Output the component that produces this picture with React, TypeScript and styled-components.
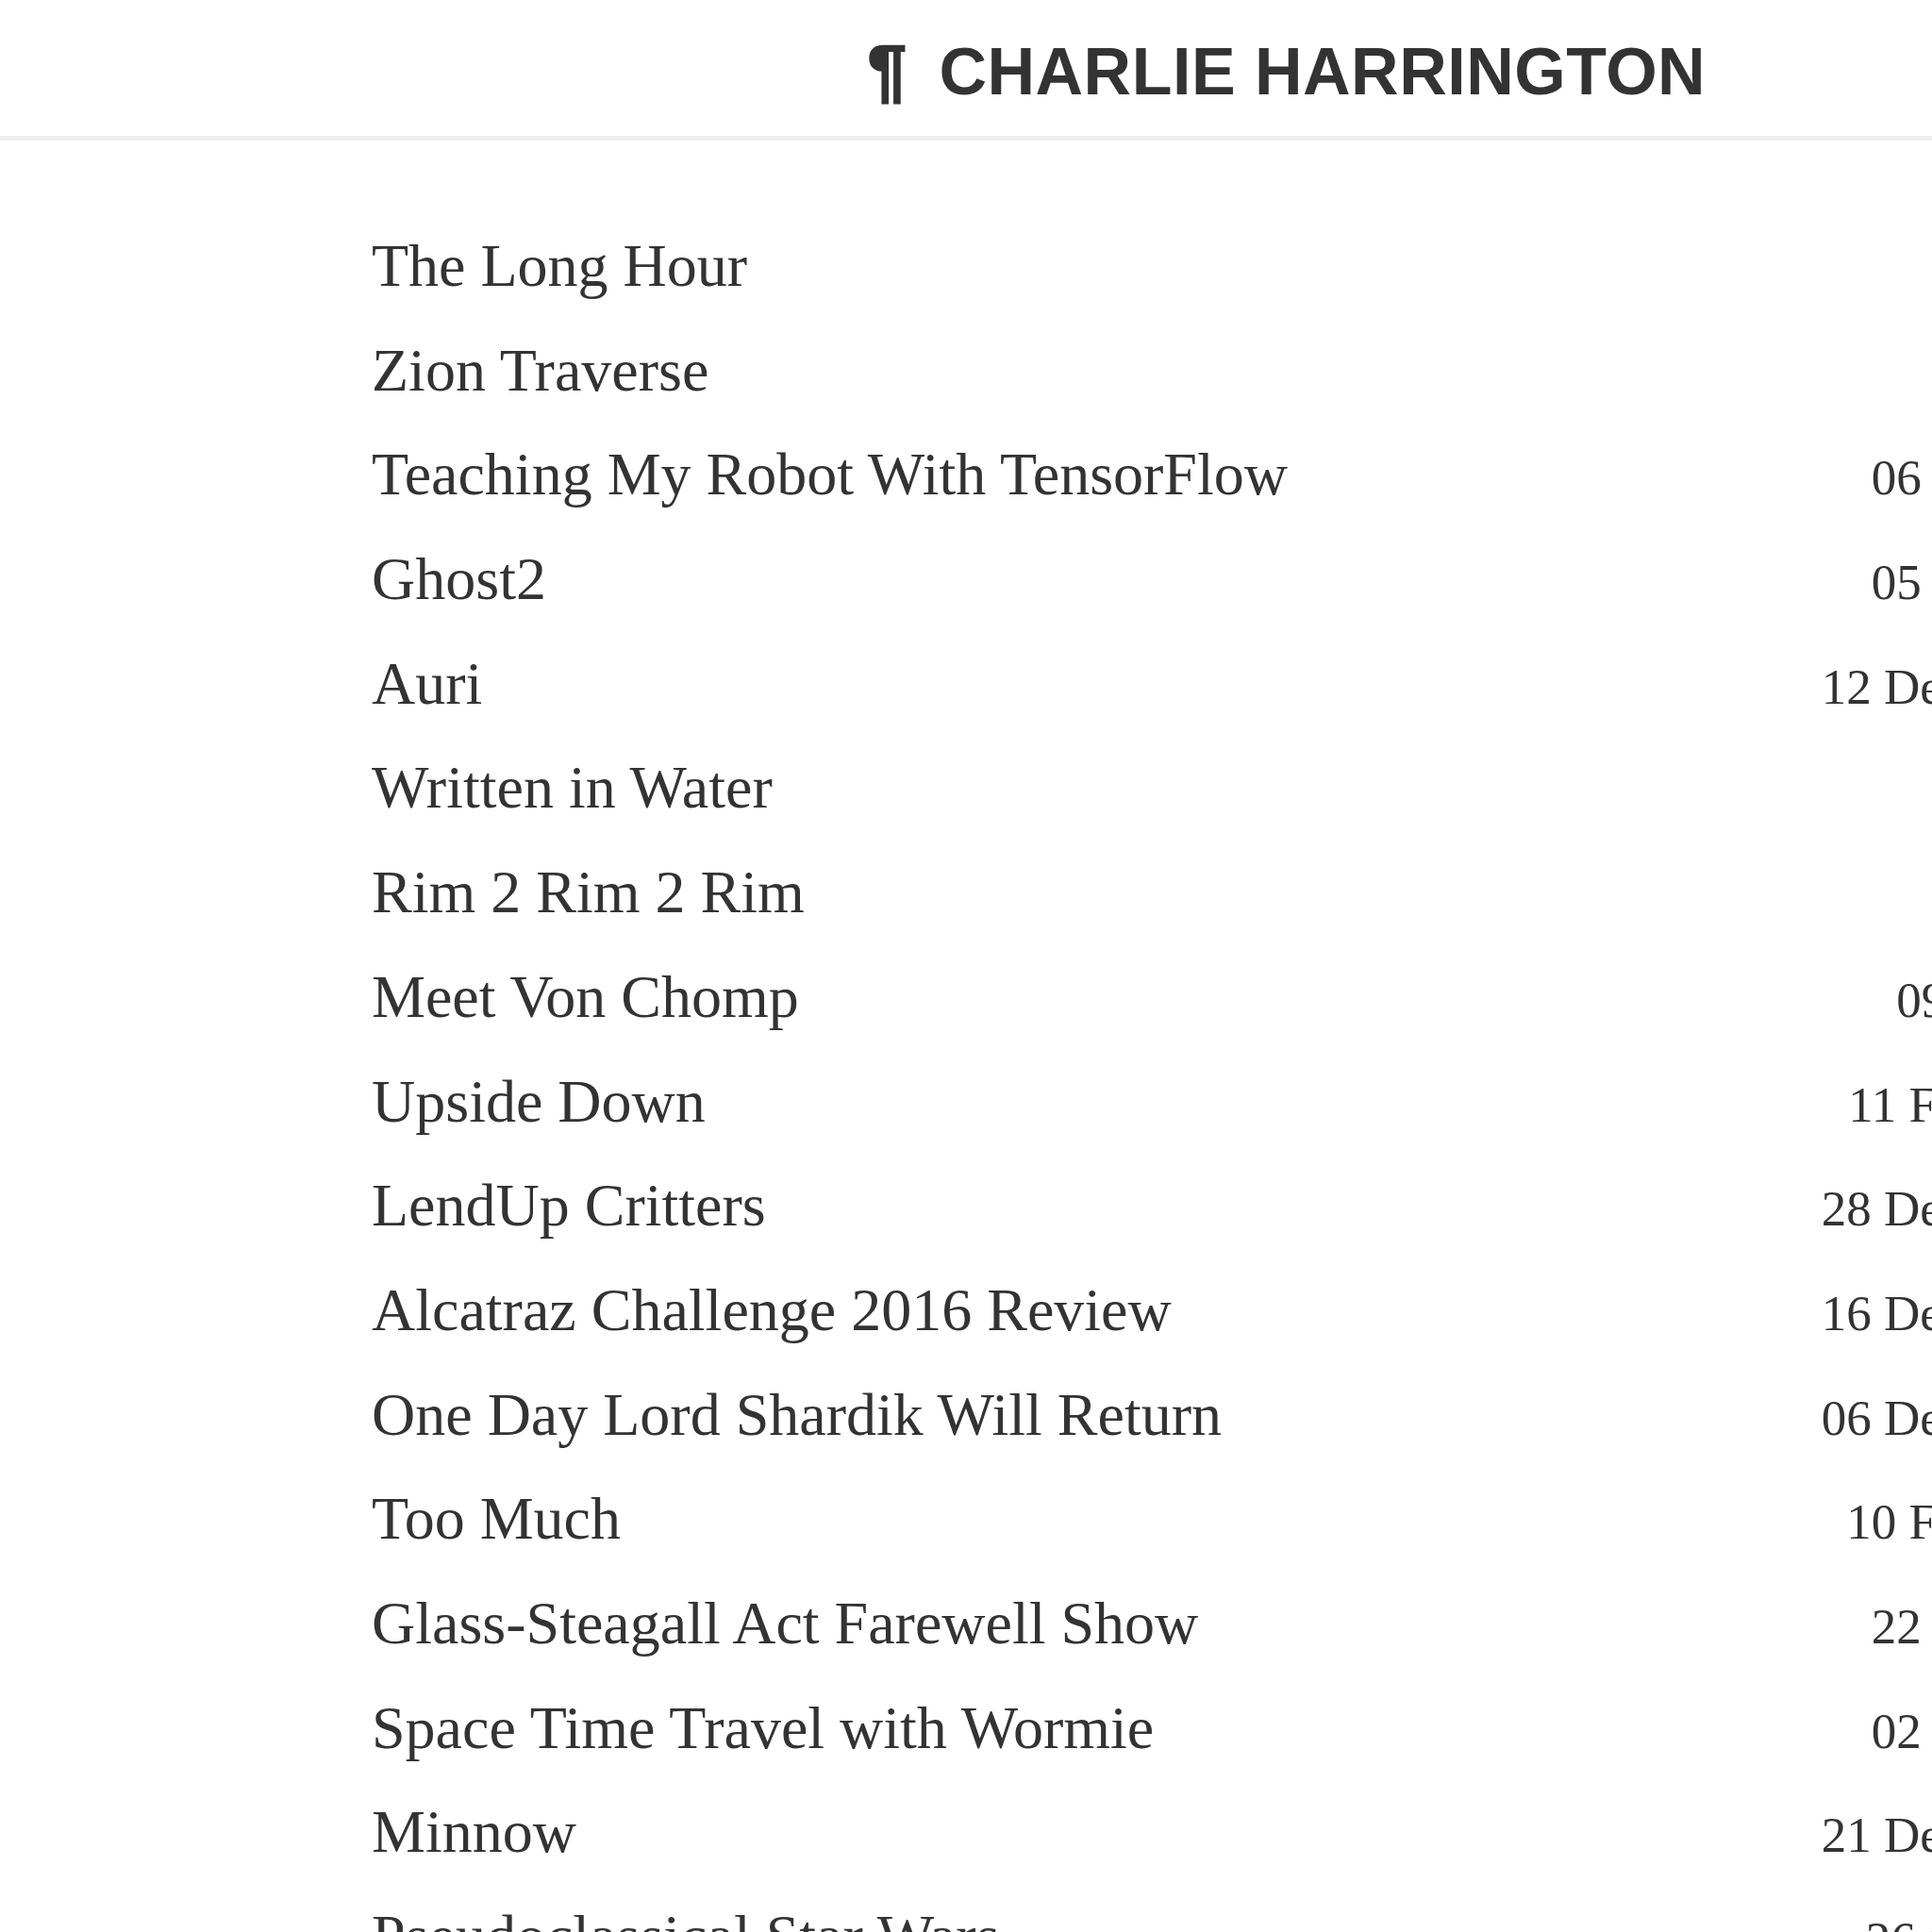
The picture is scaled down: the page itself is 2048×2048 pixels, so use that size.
import styled, { createGlobalStyle } from "styled-components";

type PostType = {
  title: string;
  date?: string;
};

const posts: PostType[] = [
  { title: "The Long Hour" },
  { title: "Zion Traverse" },
  { title: "Teaching My Robot With TensorFlow", date: "06 January 2018" },
  { title: "Ghost2", date: "05 January 2018" },
  { title: "Auri", date: "12 December 2017" },
  { title: "Written in Water" },
  { title: "Rim 2 Rim 2 Rim" },
  { title: "Meet Von Chomp", date: "09 March 2017" },
  { title: "Upside Down", date: "11 February 2017" },
  { title: "LendUp Critters", date: "28 December 2016" },
  { title: "Alcatraz Challenge 2016 Review", date: "16 December 2016" },
  { title: "One Day Lord Shardik Will Return", date: "06 December 2016" },
  { title: "Too Much", date: "10 February 2016" },
  { title: "Glass-Steagall Act Farewell Show", date: "22 January 2016" },
  { title: "Space Time Travel with Wormie", date: "02 January 2016" },
  { title: "Minnow", date: "21 December 2015" },
  { title: "Pseudoclassical Star Wars", date: "26 October 2015" },
];

const GlobalStyle = createGlobalStyle`
  html, body {
    margin: 0;
    padding: 0;
    background: #fff;
    overflow: hidden;
  }
`;

const App = () => {
  return (
    <>
      <GlobalStyle />
      <Page>
        <Header>
          <Logo>
            <Pilcrow>¶</Pilcrow>
            Charlie Harrington
          </Logo>
        </Header>
        <PostList>
          {posts.map((post, index) => (
            <PostRow key={`${post.title}-${index}`}>
              <PostTitle>{post.title}</PostTitle>
              {post.date && <PostDate>{post.date}</PostDate>}
            </PostRow>
          ))}
        </PostList>
      </Page>
    </>
  );
};

// the layout is wider than the window, the dates run off the right edge
const Page = styled.div`
  width: 2728px;
  min-height: 2048px;
  background: #fff;
  color: #333;
`;

const Header = styled.header`
  height: 144px;
  display: flex;
  justify-content: center;
  align-items: center;
  border-bottom: 5px solid #eeeeee;
`;

const Logo = styled.div`
  display: flex;
  align-items: baseline;
  font-family: "Liberation Sans", Arial, sans-serif;
  font-weight: 700;
  font-size: 70px;
  text-transform: uppercase;
  letter-spacing: 0.5px;
  color: #333;
  padding-top: 4px;
`;

const Pilcrow = styled.span`
  margin-right: 34px;
  font-size: 74px;
  -webkit-text-stroke: 2px #333;
`;

const PostList = styled.ul`
  list-style: none;
  margin: 0;
  padding: 78px 394px 0;
`;

const PostRow = styled.li`
  display: flex;
  justify-content: space-between;
  align-items: baseline;
  height: 110.7px;
  line-height: 110.7px;
`;

const PostTitle = styled.span`
  font-family: "Liberation Serif", "Times New Roman", serif;
  font-size: 64px;
  color: #333;
  white-space: nowrap;
`;

const PostDate = styled.span`
  font-family: "Liberation Serif", "Times New Roman", serif;
  font-size: 53px;
  color: #333;
  white-space: nowrap;
`;

export default App;
